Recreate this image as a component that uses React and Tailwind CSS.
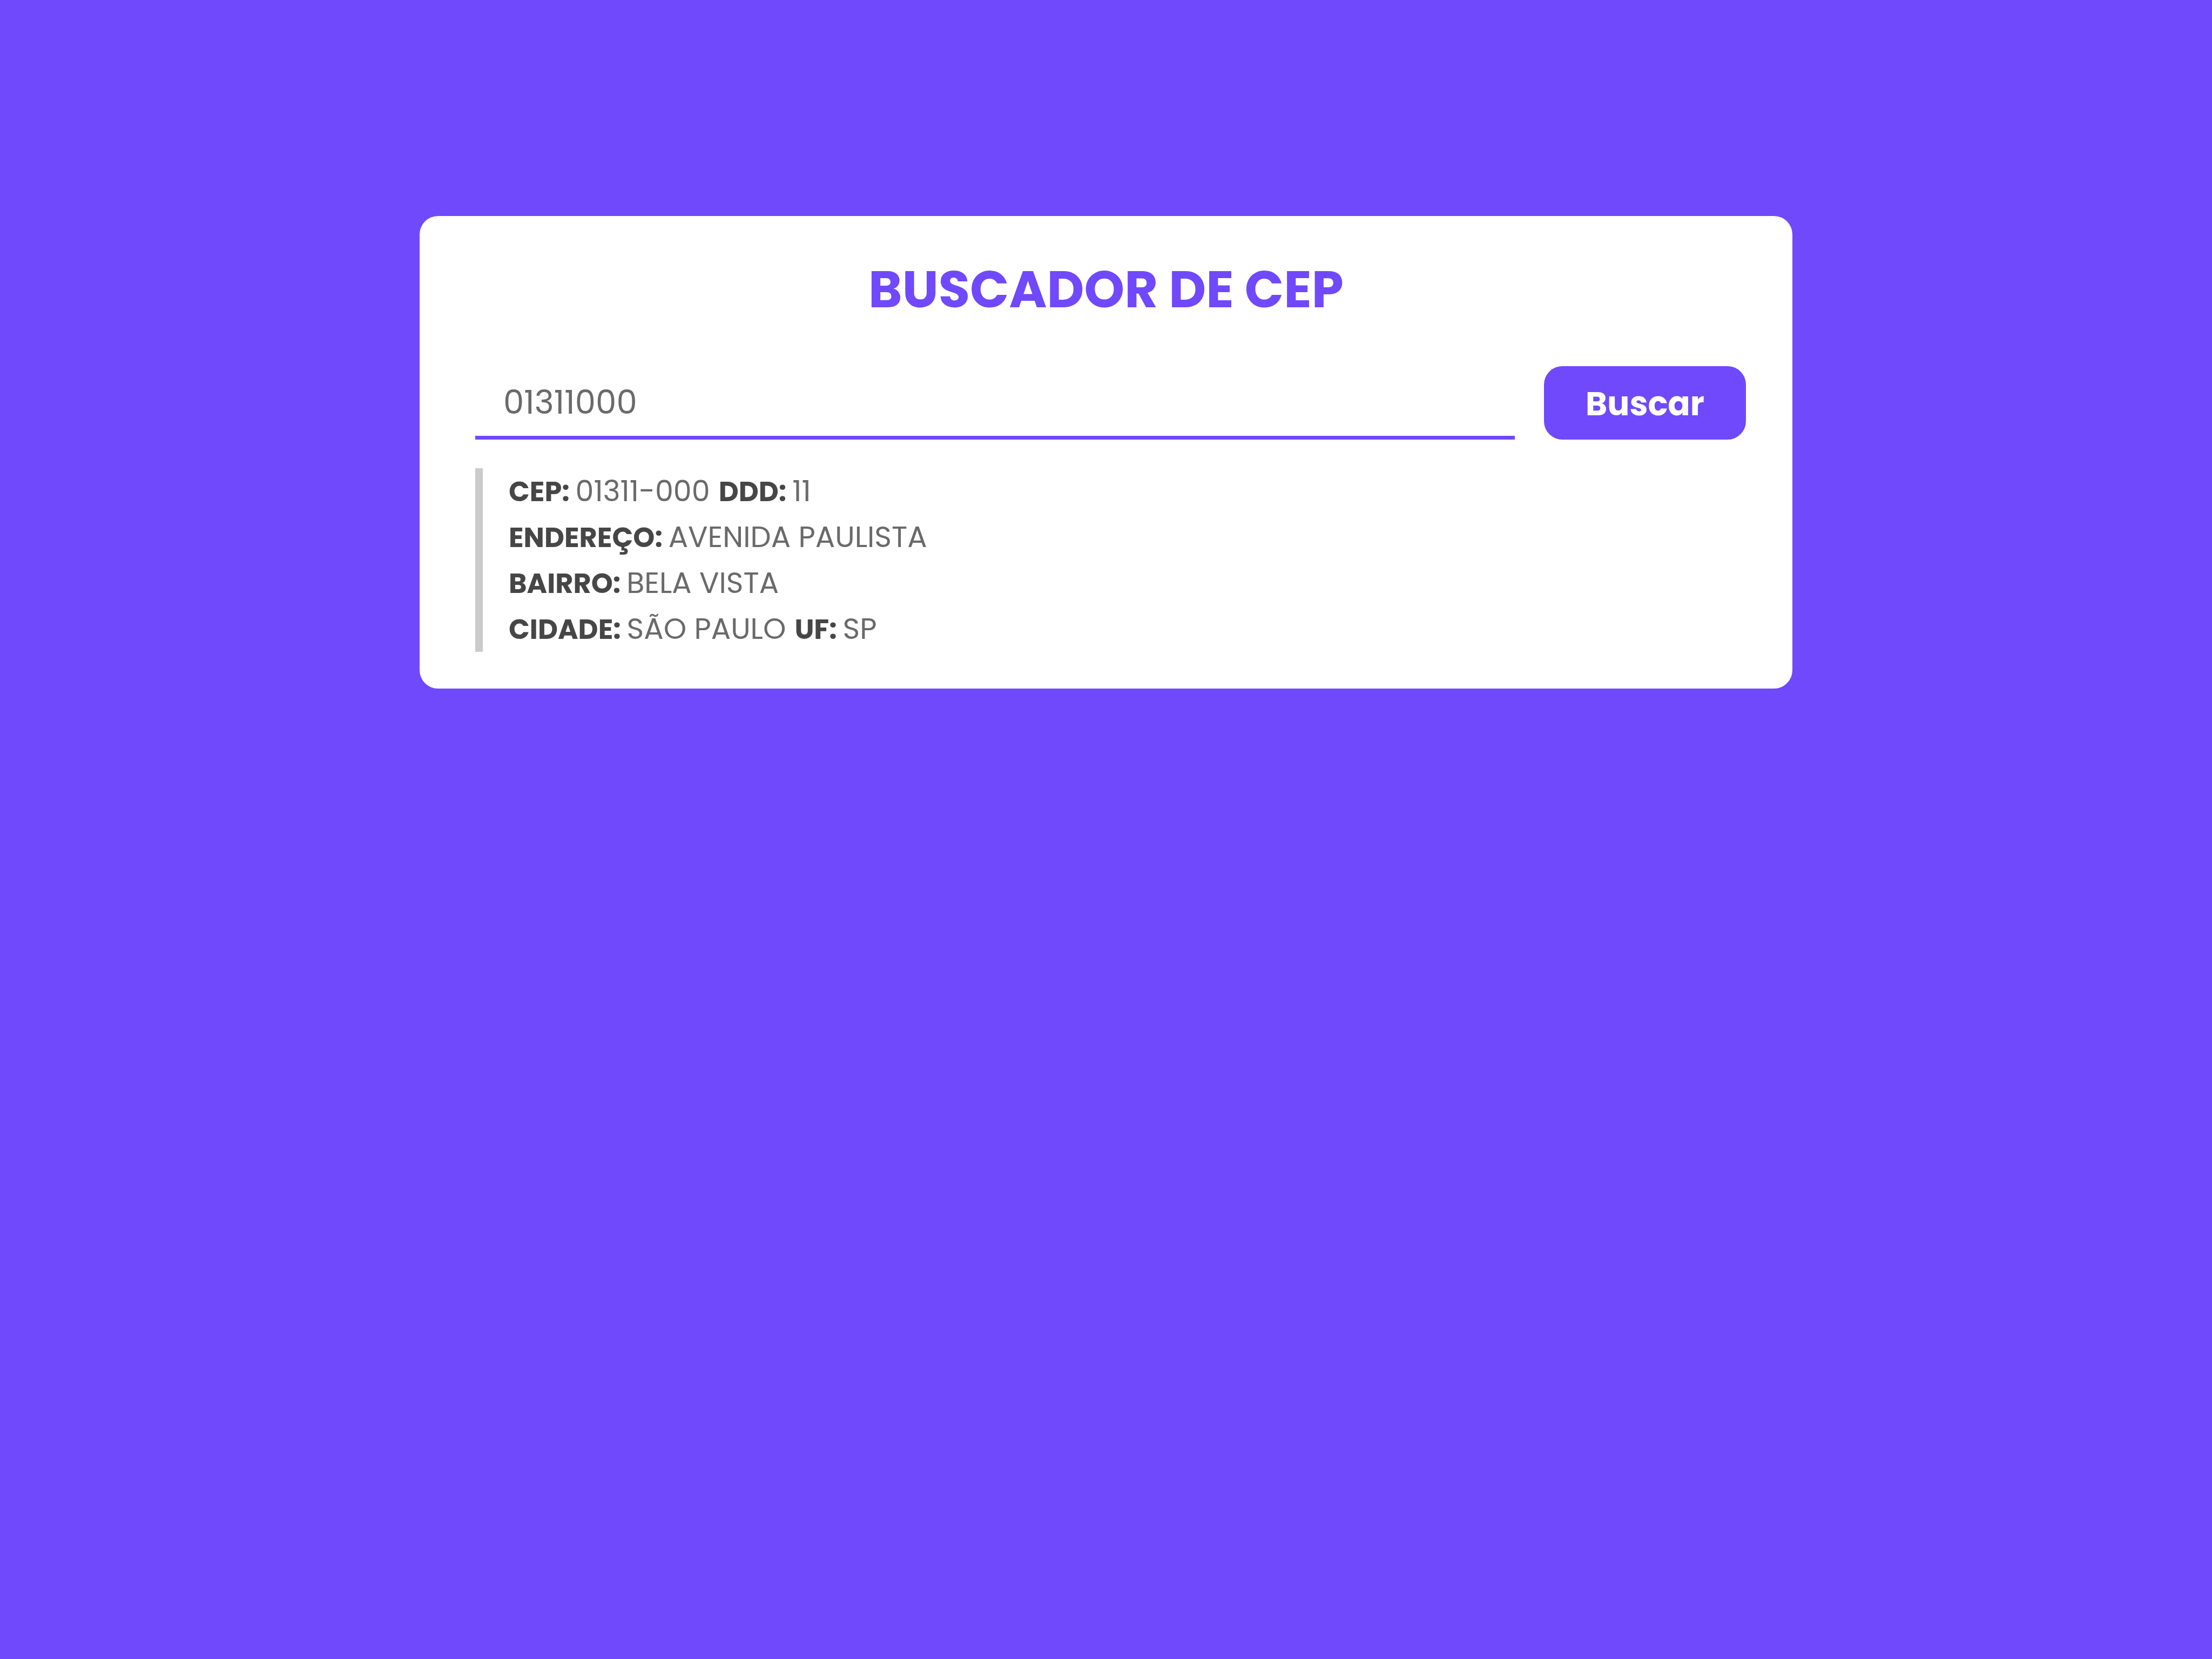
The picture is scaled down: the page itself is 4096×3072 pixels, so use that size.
import { useState } from "react";

const rows = [
  [["CEP:", "01311-000"], ["DDD:", "11"]],
  [["ENDEREÇO:", "AVENIDA PAULISTA"]],
  [["BAIRRO:", "BELA VISTA"]],
  [["CIDADE:", "SÃO PAULO"], ["UF:", "SP"]],
];

function Field({ label, value }) {
  return (
    <span>
      <strong className="text-[51px] leading-none font-bold text-[#464646]">{label} </strong>
      {value}
    </span>
  );
}

export default function App() {
  const [cep, setCep] = useState("01311000");

  return (
    <div className="min-h-screen bg-[#7049fc] px-8 pt-[400px] font-[Poppins,Inter,sans-serif]">
      <main className="mx-auto w-full max-w-[2542px] rounded-[34px] bg-white pt-16 pb-[68px]">
        <h1 className="text-center text-[95px] leading-[144px] font-bold text-[#7049fc]">
          BUSCADOR DE CEP
        </h1>
        <div className="pt-[70px] pr-[86px] pl-[103px]">
          <form className="flex h-[136px] gap-[54px]" onSubmit={(e) => e.preventDefault()}>
            <input
              type="text"
              aria-label="CEP"
              value={cep}
              onChange={(e) => setCep(e.target.value)}
              className="min-w-0 flex-1 border-b-[7px] border-[#7049fc] px-[52px] pt-1 text-[61px] text-[#6a6a6a] outline-none"
            />
            <button
              type="submit"
              className="w-[374px] rounded-[34px] bg-[#7049fc] pt-1 text-[61px] font-bold text-white"
            >
              Buscar
            </button>
          </form>
          <section
            aria-label="Resultado"
            className="mt-[53px] border-l-[14px] border-[#cbcbcb] pl-12 text-[54px] leading-[85px] text-[#6a6a6a]"
          >
            {rows.map((fields) => (
              <p key={fields[0][0]} className="flex flex-wrap gap-x-4">
                {fields.map(([label, value]) => (
                  <Field key={label} label={label} value={value} />
                ))}
              </p>
            ))}
          </section>
        </div>
      </main>
    </div>
  );
}
